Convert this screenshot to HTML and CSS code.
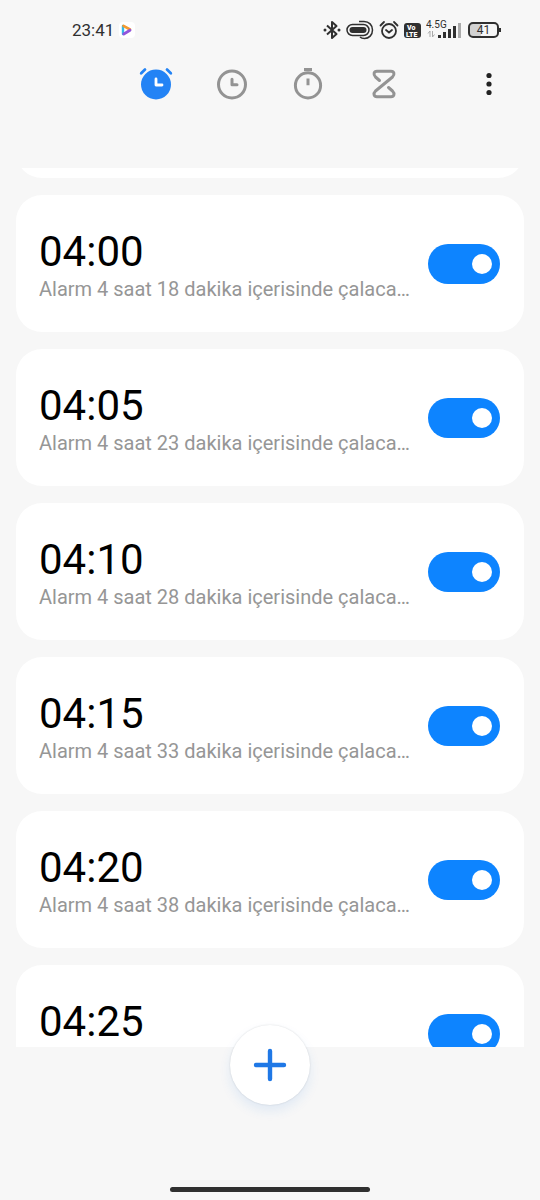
FILE: index.html
```html
<!DOCTYPE html>
<html lang="tr">
<head>
<meta charset="utf-8">
<meta name="viewport" content="width=device-width, initial-scale=1">
<title>Saat</title>
<link rel="stylesheet" href="styles.css">
</head>
<body>
<div class="app">
  <div class="status">
    <span class="status-time">23:41</span>
    <svg class="status-app" width="16" height="16" viewBox="0 0 16 16" aria-hidden="true">
      <rect width="16" height="16" rx="4" fill="#fff"/>
      <path d="M4 4v8" stroke="#35b8e8" stroke-width="2.4" stroke-linecap="round"/>
      <path d="M4.500 3.800L11 7.500" stroke="#f59a2f" stroke-width="2.600" stroke-linecap="round"/>
      <path d="M4.800 12L11 8.300" stroke="#9254dc" stroke-width="2.800" stroke-linecap="round"/>
    </svg>
    <div class="status-icons">
      <svg width="18" height="20" viewBox="0 0 18 20" fill="none" stroke="#303030" stroke-width="2" aria-label="Bluetooth" role="img">
        <path d="M4 5.500l9.500 8.500L9 18V2l4.500 4L4 14.500" stroke-linejoin="round"/>
        <circle cx="2" cy="10" r="1.500" fill="#303030" stroke="none"/>
        <circle cx="16" cy="10" r="1.500" fill="#303030" stroke="none"/>
      </svg>
      <svg width="28" height="20" viewBox="0 0 28 20" fill="none" stroke="#303030" aria-hidden="true">
        <rect x="1" y="4.500" width="22" height="11" rx="5.500" stroke-width="1.500"/>
        <rect x="3.500" y="7" width="17" height="6" rx="3" fill="#303030" stroke="none"/>
        <path d="M13 1.500h5c5 0 8.500 3.500 8.500 8.500s-3.500 8.500-8 8.500c-2 0-3.500-.5-4.500-1.500" stroke-width="1.500"/>
      </svg>
      <svg width="20" height="20" viewBox="0 0 20 20" fill="none" stroke="#303030" stroke-width="1.800" stroke-linecap="round" aria-label="Alarm" role="img">
        <circle cx="10" cy="11" r="7"/>
        <path d="M7 10l3 2.500 3-2.500M1.500 5.500L5 2M18.500 5.500L15 2"/>
      </svg>
      <svg width="17" height="16" viewBox="0 0 17 16" role="img" aria-label="VoLTE">
        <rect y="1" width="17" height="15" rx="3" fill="#303030"/>
        <text class="volte" x="3" y="8">Vo</text>
        <text class="volte" x="2" y="15">LTE</text>
      </svg>
      <svg width="36" height="20" viewBox="0 0 36 20" role="img" aria-label="4.5G">
        <text class="network" x="0" y="8">4.5G</text>
        <path d="M4 17v-6l-2 2.500M6.500 11v6l2-2.500" fill="none" stroke="#aaa"/>
        <path d="M12 15h3v3h-3zM17 12h3v6h-3zM22 9h3v9h-3zM27 6h3v12h-3z" fill="#303030"/>
        <path d="M32 3h3v15h-3z" fill="#aaa"/>
      </svg>
      <span class="battery">41</span>
    </div>
  </div>

  <header class="toolbar">
    <nav class="tabs" aria-label="Saat bölümleri">
      <button class="tab tab-active" aria-label="Alarm" aria-current="page">
        <svg width="36" height="36" viewBox="0 0 36 36" fill="none" stroke="currentColor" stroke-width="2.800" stroke-linecap="round">
          <circle cx="18" cy="18.500" r="15" fill="currentColor" stroke="none"/>
          <path d="M18 13v6h6" stroke="#fff" stroke-linejoin="round"/>
          <path d="M3.200 7.200L7 3.600M29 3.600l3.800 3.600"/>
        </svg>
      </button>
      <button class="tab" aria-label="Dünya saati">
        <svg width="36" height="36" viewBox="0 0 36 36" fill="none" stroke="currentColor" stroke-width="3" stroke-linecap="round" stroke-linejoin="round">
          <circle cx="18" cy="18.500" r="13.500"/>
          <path d="M18 13.200v5.600h5"/>
        </svg>
      </button>
      <button class="tab" aria-label="Kronometre">
        <svg width="36" height="36" viewBox="0 0 36 36" fill="none" stroke="currentColor" stroke-width="3">
          <circle cx="18" cy="19.400" r="12.600"/>
          <path d="M14 3.400h8M18 12.500v6.800"/>
        </svg>
      </button>
      <button class="tab" aria-label="Zamanlayıcı">
        <svg width="36" height="36" viewBox="0 0 36 36" fill="none" stroke="currentColor" stroke-width="3" stroke-linecap="round" stroke-linejoin="round">
          <path d="M13.500 14.500L9.500 11C7 8.500 7.800 5.300 11 5.300h14c3.200 0 4 3.200 1.500 5.700L9.500 25c-2.500 2.500-1.700 5.700 1.500 5.700h14c3.200 0 4-3.200 1.500-5.700l-4-3.500"/>
        </svg>
      </button>
    </nav>
    <button class="more" aria-label="Diğer seçenekler">
      <svg width="36" height="36" viewBox="0 0 36 36" fill="#222">
        <circle cx="18" cy="9.500" r="2.600"/><circle cx="18" cy="18" r="2.600"/><circle cx="18" cy="26.500" r="2.600"/>
      </svg>
    </button>
  </header>

  <main class="scroller">
    <ul class="alarms">
      <li class="alarm" aria-hidden="true"></li>
      <li class="alarm">
        <label class="alarm-text" for="a1"><span class="alarm-time">04:00</span><span class="alarm-note">Alarm 4 saat 18 dakika içerisinde çalacaktır</span></label>
        <input class="switch" type="checkbox" role="switch" id="a1" checked>
      </li>
      <li class="alarm">
        <label class="alarm-text" for="a2"><span class="alarm-time">04:05</span><span class="alarm-note">Alarm 4 saat 23 dakika içerisinde çalacaktır</span></label>
        <input class="switch" type="checkbox" role="switch" id="a2" checked>
      </li>
      <li class="alarm">
        <label class="alarm-text" for="a3"><span class="alarm-time">04:10</span><span class="alarm-note">Alarm 4 saat 28 dakika içerisinde çalacaktır</span></label>
        <input class="switch" type="checkbox" role="switch" id="a3" checked>
      </li>
      <li class="alarm">
        <label class="alarm-text" for="a4"><span class="alarm-time">04:15</span><span class="alarm-note">Alarm 4 saat 33 dakika içerisinde çalacaktır</span></label>
        <input class="switch" type="checkbox" role="switch" id="a4" checked>
      </li>
      <li class="alarm">
        <label class="alarm-text" for="a5"><span class="alarm-time">04:20</span><span class="alarm-note">Alarm 4 saat 38 dakika içerisinde çalacaktır</span></label>
        <input class="switch" type="checkbox" role="switch" id="a5" checked>
      </li>
      <li class="alarm">
        <label class="alarm-text" for="a6"><span class="alarm-time">04:25</span><span class="alarm-note">&nbsp;</span></label>
        <input class="switch" type="checkbox" role="switch" id="a6" checked>
      </li>
    </ul>
  </main>

  <footer class="bottom">
    <button class="add" aria-label="Alarm ekle">
      <svg width="36" height="36" viewBox="0 0 36 36" fill="none" stroke="#1f78e6" stroke-width="4.400" stroke-linecap="round">
        <path d="M18 4v28M4 18h28"/>
      </svg>
    </button>
    <div class="home-bar"></div>
  </footer>
</div>
</body>
</html>
```
FILE: styles.css
```css
* {
  box-sizing: border-box;
}

body {
  margin: 0;
  background: #f7f7f7;
  color: #000;
  font-family: Roboto, "Noto Sans", sans-serif;
}

button {
  padding: 0;
  border: 0;
  background: none;
  cursor: pointer;
}

svg {
  display: block;
}

.app {
  display: flex;
  flex-direction: column;
  height: 100vh;
}

.status {
  display: flex;
  align-items: center;
  height: 60px;
  padding: 0 41px 0 72px;
  color: #303030;
}

.status-time {
  font-size: 17px;
}

.status-app {
  margin-left: 5px;
}

.status-icons {
  display: flex;
  align-items: center;
  gap: 5px;
  margin-left: auto;
}

.volte {
  fill: #fff;
  font-size: 7px;
  font-weight: 900;
}

.network {
  fill: #303030;
  font-size: 10px;
}

.battery {
  position: relative;
  width: 31px;
  margin-left: 1px;
  border: 2px solid #303030;
  border-radius: 5px;
  background: linear-gradient(90deg, #d2d2d2 41%, transparent 41%);
  font-size: 12px;
  line-height: 12px;
  text-align: center;
}

.battery::after {
  content: "";
  position: absolute;
  top: 4px;
  right: -4px;
  width: 2px;
  height: 4px;
  background: #303030;
}

.toolbar {
  display: grid;
  grid-template-columns: 1fr auto 1fr;
  align-items: start;
  height: 108px;
  padding: 6px 33px 0;
}

.tabs {
  display: flex;
  grid-column: 2;
  gap: 40px;
}

.tab {
  color: #939393;
}

.tab-active {
  color: #2383f5;
}

.more {
  justify-self: end;
}

.scroller {
  flex: 1;
  min-height: 0;
  overflow: hidden;
}

.alarms {
  display: flex;
  flex-direction: column;
  gap: 17px;
  margin: -127px 0 0;
  padding: 0 16px;
  list-style: none;
}

.alarm {
  display: flex;
  align-items: center;
  gap: 10px;
  min-height: 137px;
  padding: 0 24px 0 23px;
  border-radius: 26px;
  background: #fff;
}

.alarm-text {
  flex: 1;
  min-width: 0;
}

.alarm-time {
  display: block;
  font-size: 42px;
  line-height: 50px;
}

.alarm-note {
  display: block;
  overflow: hidden;
  color: #969696;
  font-size: 20px;
  line-height: 24px;
  text-overflow: ellipsis;
  white-space: nowrap;
}

.switch {
  display: flex;
  flex: none;
  align-items: center;
  width: 72px;
  height: 40px;
  margin: 0;
  padding: 0 8px;
  border-radius: 20px;
  appearance: none;
  background: #c8c8c8;
  cursor: pointer;
}

.switch::before {
  content: "";
  width: 20px;
  height: 20px;
  border-radius: 50%;
  background: #fff;
}

.switch:checked {
  justify-content: flex-end;
  background: #0d84ff;
}

.bottom {
  display: flex;
  flex-direction: column;
  align-items: center;
  justify-content: space-between;
  height: 153px;
  padding-bottom: 8px;
}

.add {
  display: grid;
  place-items: center;
  width: 80px;
  height: 80px;
  margin-top: -22px;
  border-radius: 50%;
  background: #fff;
  box-shadow: 0 0 2px rgba(0, 0, 0, 0.14), 0 6px 12px rgba(31, 120, 230, 0.1);
  z-index: 1;
}

.home-bar {
  width: 37%;
  height: 5px;
  border-radius: 3px;
  background: #303030;
}
```
